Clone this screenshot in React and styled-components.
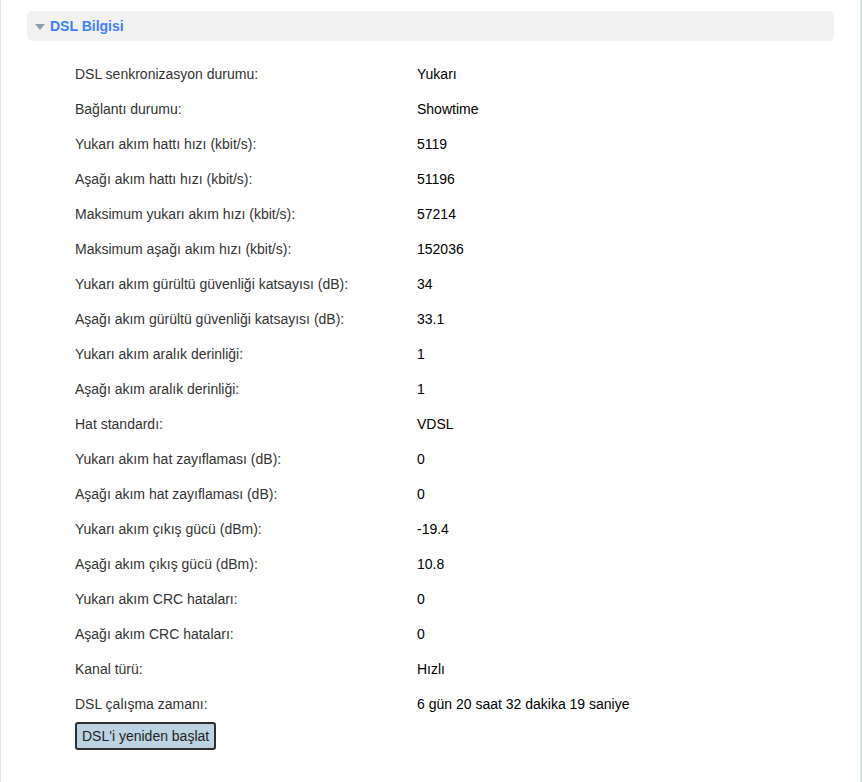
import React from "react";
import styled, { createGlobalStyle } from "styled-components";

const GlobalStyle = createGlobalStyle`
  html, body {
    margin: 0;
    padding: 0;
    background: #fff;
    font-family: "Liberation Sans", Arial, sans-serif;
  }
`;

const Page = styled.div`
  width: 862px;
  height: 782px;
  box-sizing: border-box;
  border-left: 1px solid #e3e3e3;
  border-right: 2px solid #dde3ea;
  padding-top: 11px;
`;

const SectionHeader = styled.div`
  margin-left: 26px;
  width: 807px;
  height: 30px;
  background: #f2f2f2;
  border-radius: 5px;
  display: flex;
  align-items: center;
  padding-left: 8px;
  box-sizing: border-box;
  gap: 5px;
`;

const Caret = styled.span`
  width: 0;
  height: 0;
  border-left: 5px solid transparent;
  border-right: 5px solid transparent;
  border-top: 6px solid #8d9eab;
  margin-top: 2px;
`;

const Title = styled.span`
  color: #3d7eff;
  font-weight: bold;
  font-size: 14px;
`;

const InfoTable = styled.div`
  display: grid;
  grid-template-columns: 342px auto;
  grid-auto-rows: 35px;
  padding-left: 74px;
  margin-top: 15px;
  align-items: center;
  font-size: 14px;
`;

const Label = styled.div`
  color: #333;
`;

const Value = styled.div`
  color: #000;
`;

const RestartButton = styled.button`
  margin-left: 74px;
  margin-top: 1px;
  height: 28px;
  padding: 0 5px;
  background: #bcd3e4;
  border: 2px solid #2f2f2f;
  border-radius: 3px;
  font-family: "Liberation Sans", Arial, sans-serif;
  font-size: 14px;
  color: #222;
  cursor: pointer;
`;

const rows = [
  ["DSL senkronizasyon durumu:", "Yukarı"],
  ["Bağlantı durumu:", "Showtime"],
  ["Yukarı akım hattı hızı (kbit/s):", "5119"],
  ["Aşağı akım hattı hızı (kbit/s):", "51196"],
  ["Maksimum yukarı akım hızı (kbit/s):", "57214"],
  ["Maksimum aşağı akım hızı (kbit/s):", "152036"],
  ["Yukarı akım gürültü güvenliği katsayısı (dB):", "34"],
  ["Aşağı akım gürültü güvenliği katsayısı (dB):", "33.1"],
  ["Yukarı akım aralık derinliği:", "1"],
  ["Aşağı akım aralık derinliği:", "1"],
  ["Hat standardı:", "VDSL"],
  ["Yukarı akım hat zayıflaması (dB):", "0"],
  ["Aşağı akım hat zayıflaması (dB):", "0"],
  ["Yukarı akım çıkış gücü (dBm):", "-19.4"],
  ["Aşağı akım çıkış gücü (dBm):", "10.8"],
  ["Yukarı akım CRC hataları:", "0"],
  ["Aşağı akım CRC hataları:", "0"],
  ["Kanal türü:", "Hızlı"],
  ["DSL çalışma zamanı:", "6 gün 20 saat 32 dakika 19 saniye"],
];

export default function App() {
  return (
    <>
      <GlobalStyle />
      <Page>
        <SectionHeader>
          <Caret />
          <Title>DSL Bilgisi</Title>
        </SectionHeader>
        <InfoTable>
          {rows.map(([label, value]) => (
            <React.Fragment key={label}>
              <Label>{label}</Label>
              <Value>{value}</Value>
            </React.Fragment>
          ))}
        </InfoTable>
        <RestartButton>DSL'i yeniden başlat</RestartButton>
      </Page>
    </>
  );
}
